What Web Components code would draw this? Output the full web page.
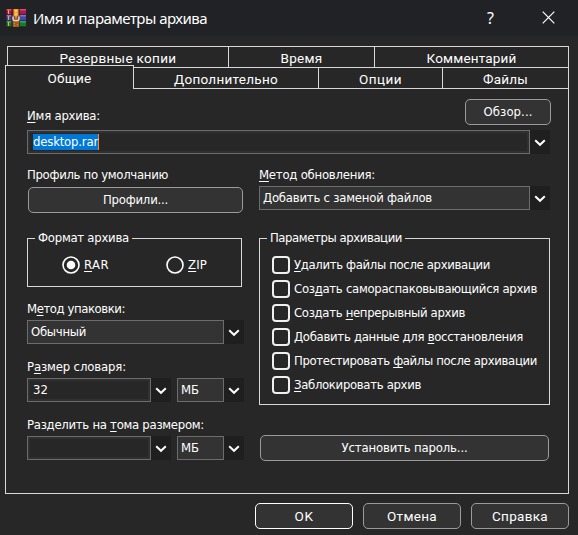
<!DOCTYPE html>
<html lang="ru">
<head>
<meta charset="utf-8">
<title>Имя и параметры архива</title>
<style>
html, body { margin: 0; width: 578px; height: 535px; overflow: hidden; background: #272727; }
</style>
</head>
<body>
<archive-dialog></archive-dialog>
<script>
const define = (name, html, init) => customElements.define(name, class extends HTMLElement {
  connectedCallback() {
    if (this.shadowRoot) return;
    const t = document.createElement('template');
    t.innerHTML = html;
    this.attachShadow({ mode: 'open' }).append(t.content.cloneNode(true));
    if (init) init(this, this.shadowRoot);
  }
});

// Single-line text whose tracking is adjusted to fill the width given in "w".
define('fit-text', `<style>
  :host { display: inline-block; white-space: nowrap; flex: none; }
  :host([ui]) { font: 13.5px/18px Roboto, "Liberation Sans", sans-serif; }
</style><slot></slot>`, el => {
  const w = +el.getAttribute('w');
  if (!w) return;
  const n = el.textContent.length;
  const natural = el.getBoundingClientRect().width;
  const ls = (w - natural) / n;
  el.style.letterSpacing = ls.toFixed(3) + 'px';
});

define('rar-icon', `<style>:host{display:block;width:20px;height:18px}svg{display:block}</style>
<svg width="20" height="18" viewBox="0 0 20 18">
  <path fill="#a51d4b" d="M0 0h20v6H0z"/><path fill="#e0486b" d="M0 0h20v1.5H0z"/><path fill="#6d1030" d="M0 5h20v1H0z"/>
  <path fill="#4747a5" d="M0 6h20v6H0z"/><path fill="#7777cf" d="M0 6h20v1.5H0z"/><path fill="#2b2b70" d="M0 11h20v1H0z"/>
  <path fill="#167a35" d="M0 12h20v6H0z"/><path fill="#36a452" d="M0 12h20v1.5H0z"/><path fill="#0a4a1e" d="M0 17h20v1H0z"/>
  <path fill="#3b1020" opacity=".6" d="M0 0h1v18H0zM5 0h2v18H5zM13 0h1v18h-1z"/>
  <path fill="#dfb02c" d="M2 1h1v4H2zM2 7h1v4H2zM2 13h1v4H2z"/>
  <path fill="#a85a1c" d="M7 0h6v18H7z"/><path fill="#e9a338" d="M8 0h4v7H8z"/><path fill="#f6c95a" d="M9 1h2v2H9zM9 4h2v2H9z"/>
  <path fill="none" stroke="#dcdce4" stroke-width="1.400" d="M7 7.500v3Q7 11.500 8.500 11.500h3Q13 11.500 13 10.500v-3"/>
  <path fill="#7a4316" d="M8.500 8h3v2.500h-3z"/><path fill="#f3c04a" d="M9.500 6h1v4h-1z"/>
  <path fill="#d98e2c" d="M8 14h1v1H8zM11 15h1v1h-1zM8 16h1v1H8z"/>
</svg>`);

define('title-bar', `<style>
  :host { display: flex; align-items: center; height: 36px; box-sizing: border-box; padding: 0 0 1px 6px; background: #202226; color: #fff; font: 15px/20px "Noto Sans", sans-serif; }
  rar-icon { margin-right: 7px; }
  .q { margin-left: auto; font-size: 16px; width: 8px; margin-right: -2px; }
  svg { margin: 0 23px 0 49px; }
</style><rar-icon></rar-icon><slot></slot><span class="q">?</span>
<svg width="13" height="13" viewBox="0 0 13 13"><path d="M.7.7l11.600 11.600M12.300.7L.7 12.300" stroke="#fff" stroke-width="1.200"/></svg>`);

define('tab-item', `<style>
  :host { display: flex; justify-content: center; box-sizing: border-box; height: 21px; padding-top: 2px; border: solid #d8d8d8; border-width: 1px 1px 0 0; }
  :host([active]) { height: 24px; margin-top: -2px; padding-top: 3px; border-left-width: 1px; background: #272727; position: relative; }
</style><slot></slot>`);

define('tab-rows', `<style>
  :host { display: block; margin: 0 9px 0 5px; }
  .r { display: grid; height: 21px; }
  .a { grid-template-columns: 221px 146px 194px; margin-left: 2px; border-left: 1px solid #d8d8d8; height: 21px; box-sizing: border-box; }
  .b { grid-template-columns: 129px 185px 124px 126px; }
  .a ::slotted(*), .b ::slotted(*) { min-width: 0; }
</style><div class="r a"><slot name="back"></slot></div><div class="r b"><slot></slot></div>`);

define('tab-panel', `<style>
  :host { display: block; box-sizing: border-box; height: 406px; margin: 0 9px 0 5px; border: 1px solid #d8d8d8; border-top: 0; padding-left: 21px;
    background: linear-gradient(#d8d8d8,#d8d8d8) 127px 0 / 435px 1px no-repeat; }
</style><slot></slot>`);

define('push-button', `<style>
  :host { display: flex; box-sizing: border-box; height: 26px; border: 1px solid #9b9b9b; border-radius: 5px; background: #333; justify-content: center; align-items: center; }
  :host([default]) { border-color: #fff; }
</style><slot></slot>`);

define('combo-box', `<style>
  :host { display: flex; height: 24px; }
  .f { flex: 1; display: flex; align-items: center; box-sizing: border-box; border: 1px solid #6c6c6c; background: #333; padding: 0 0 0 3px; min-width: 0; }
  :host([edit]) .f { border-color: #6c6c6c; padding: 0 0 1px 3px; background: #272727; box-shadow: inset 0 0 0 2px #303030; }
  :host([edit]) slot { display: block; margin-left: 2px; }
  .d { width: 20px; background: #1f1f1f; display: flex; align-items: center; justify-content: center; padding-top: 2px; box-sizing: border-box; }
</style><div class="f"><slot></slot></div>
<div class="d"><svg width="12" height="8" viewBox="0 0 12 8"><path d="M1.200 1.300L6 5.800L10.800 1.300" fill="none" stroke="#fff" stroke-width="2"/></svg></div>`);

define('selected-text', `<style>:host{display:block;height:16px;line-height:16px;background:#0078d7;border-right:1px solid #ff8728}</style><slot></slot>`);

define('group-box', `<style>
  :host { display: block; box-sizing: border-box; border: 1px solid #d8d8d8; }
  .t { display: block; width: max-content; line-height: 18px; margin-top: -10px; margin-left: 7px; padding: 0 3px; background: #272727; }
</style><span class="t"><slot name="title"></slot></span><slot></slot>`);

define('check-box', `<style>
  :host { display: flex; align-items: center; height: 24px; gap: 4px; }
  i { width: 18px; height: 18px; box-sizing: border-box; border: 2px solid #f0f0f0; border-radius: 4px; flex: none; }
</style><i></i><slot></slot>`);

define('radio-button', `<style>
  :host { display: flex; align-items: center; gap: 4px; height: 18px; }
  circle.dot { display: none; } :host([checked]) circle.dot { display: inline; }
</style><svg width="18" height="18" viewBox="0 0 18 18"><circle cx="9" cy="9" r="8" fill="none" stroke="#fff" stroke-width="1.600"/><circle class="dot" cx="9" cy="9" r="4.300" fill="#fff"/></svg><slot></slot>`);

define('archive-dialog', `<style>
  :host { display: block; width: 578px; height: 535px; background: #272727; color: #fff; font: 13px/18px "DejaVu Sans Condensed", "DejaVu Sans", sans-serif; }
  u { text-decoration: underline; text-decoration-thickness: 1px; text-underline-offset: 2px; text-decoration-skip-ink: none; }
  tab-rows { padding-top: 10px; }
  .name { display: flex; justify-content: space-between; width: 524px; padding-top: 11px; height: 31px; }
  .name > fit-text { margin-top: 8px; }
  .cols { display: grid; grid-template-columns: 217px 291px; gap: 15px; padding-top: 12px; width: 523px; }
  .label { display: block; height: 18px; }
  .radios { display: flex; padding: 9px 0 0 34px; gap: 57px; height: 31px; }
  .pair { display: grid; grid-template-columns: 144px 67px; gap: 6px; }
  .foot { display: flex; gap: 10px; justify-content: flex-end; padding: 9px 9px 0 0; }
  .foot push-button { width: 98px; }
</style>
<title-bar><fit-text w="174">Имя и параметры архива</fit-text></title-bar>
<tab-rows>
  <tab-item slot="back"><fit-text ui w="117">Резервные копии</fit-text></tab-item>
  <tab-item slot="back"><fit-text ui w="42">Время</fit-text></tab-item>
  <tab-item slot="back"><fit-text ui w="90">Комментарий</fit-text></tab-item>
  <tab-item active><fit-text ui w="44">Общие</fit-text></tab-item>
  <tab-item><fit-text ui w="104">Дополнительно</fit-text></tab-item>
  <tab-item><fit-text ui w="43">Опции</fit-text></tab-item>
  <tab-item><fit-text ui w="45">Файлы</fit-text></tab-item>
</tab-rows>
<tab-panel>
  <div class="name"><fit-text w="73"><u>И</u>мя архива:</fit-text>
    <push-button style="width:86px"><fit-text w="49">Обзор...</fit-text></push-button></div>
  <combo-box edit style="width:523px"><selected-text><fit-text w="65">desktop.rar</fit-text></selected-text></combo-box>
  <div class="cols">
    <div>
      <div class="label"><fit-text w="141">Профиль по умолчанию</fit-text></div>
      <push-button style="margin:3px 1px 25px"><fit-text w="65">Профили...</fit-text></push-button>
      <group-box style="width:215px;height:49px"><fit-text slot="title" w="91">Формат архива</fit-text>
        <div class="radios"><radio-button checked><fit-text w="25"><u>R</u>AR</fit-text></radio-button><radio-button><fit-text w="19"><u>Z</u>IP</fit-text></radio-button></div>
      </group-box>
      <div class="label" style="margin:13px 0 2px"><fit-text w="98">М<u>е</u>тод упаковки:</fit-text></div>
      <combo-box><fit-text w="55">Обычный</fit-text></combo-box>
      <div class="label" style="margin:14px 0 2px"><fit-text w="99">Р<u>а</u>змер словаря:</fit-text></div>
      <div class="pair"><combo-box edit><fit-text w="15">32</fit-text></combo-box><combo-box><fit-text w="18">МБ</fit-text></combo-box></div>
      <div class="label" style="margin:14px 0 2px"><fit-text w="177">Разделить на <u>т</u>ома размером:</fit-text></div>
      <div class="pair"><combo-box edit></combo-box><combo-box><fit-text w="18">МБ</fit-text></combo-box></div>
    </div>
    <div>
      <div class="label" style="margin-bottom:2px"><fit-text w="116"><u>М</u>етод обновления:</fit-text></div>
      <combo-box><fit-text w="169">Добавить с заменой файлов</fit-text></combo-box>
      <group-box style="height:167px;margin:28px 0 30px"><fit-text slot="title" w="132">Параметры архивации</fit-text>
        <div style="padding:6px 0 0 12px">
          <check-box><fit-text w="196"><u>У</u>далить файлы после архивации</fit-text></check-box>
          <check-box><fit-text w="243">Соз<u>д</u>ать самораспаковывающийся архив</fit-text></check-box>
          <check-box><fit-text w="171">Создать <u>н</u>епрерывный архив</fit-text></check-box>
          <check-box><fit-text w="229">Добавить данные для <u>в</u>осстановления</fit-text></check-box>
          <check-box><fit-text w="243">Протестировать <u>ф</u>айлы после архивации</fit-text></check-box>
          <check-box><fit-text w="127"><u>З</u>аблокировать архив</fit-text></check-box>
        </div>
      </group-box>
      <push-button style="margin:0 1px"><fit-text w="126">Установить пароль...</fit-text></push-button>
    </div>
  </div>
</tab-panel>
<div class="foot">
  <push-button default><fit-text ui w="19">OK</fit-text></push-button>
  <push-button><fit-text ui w="50">Отмена</fit-text></push-button>
  <push-button><fit-text ui w="56">Справка</fit-text></push-button>
</div>`);
</script>
</body>
</html>
